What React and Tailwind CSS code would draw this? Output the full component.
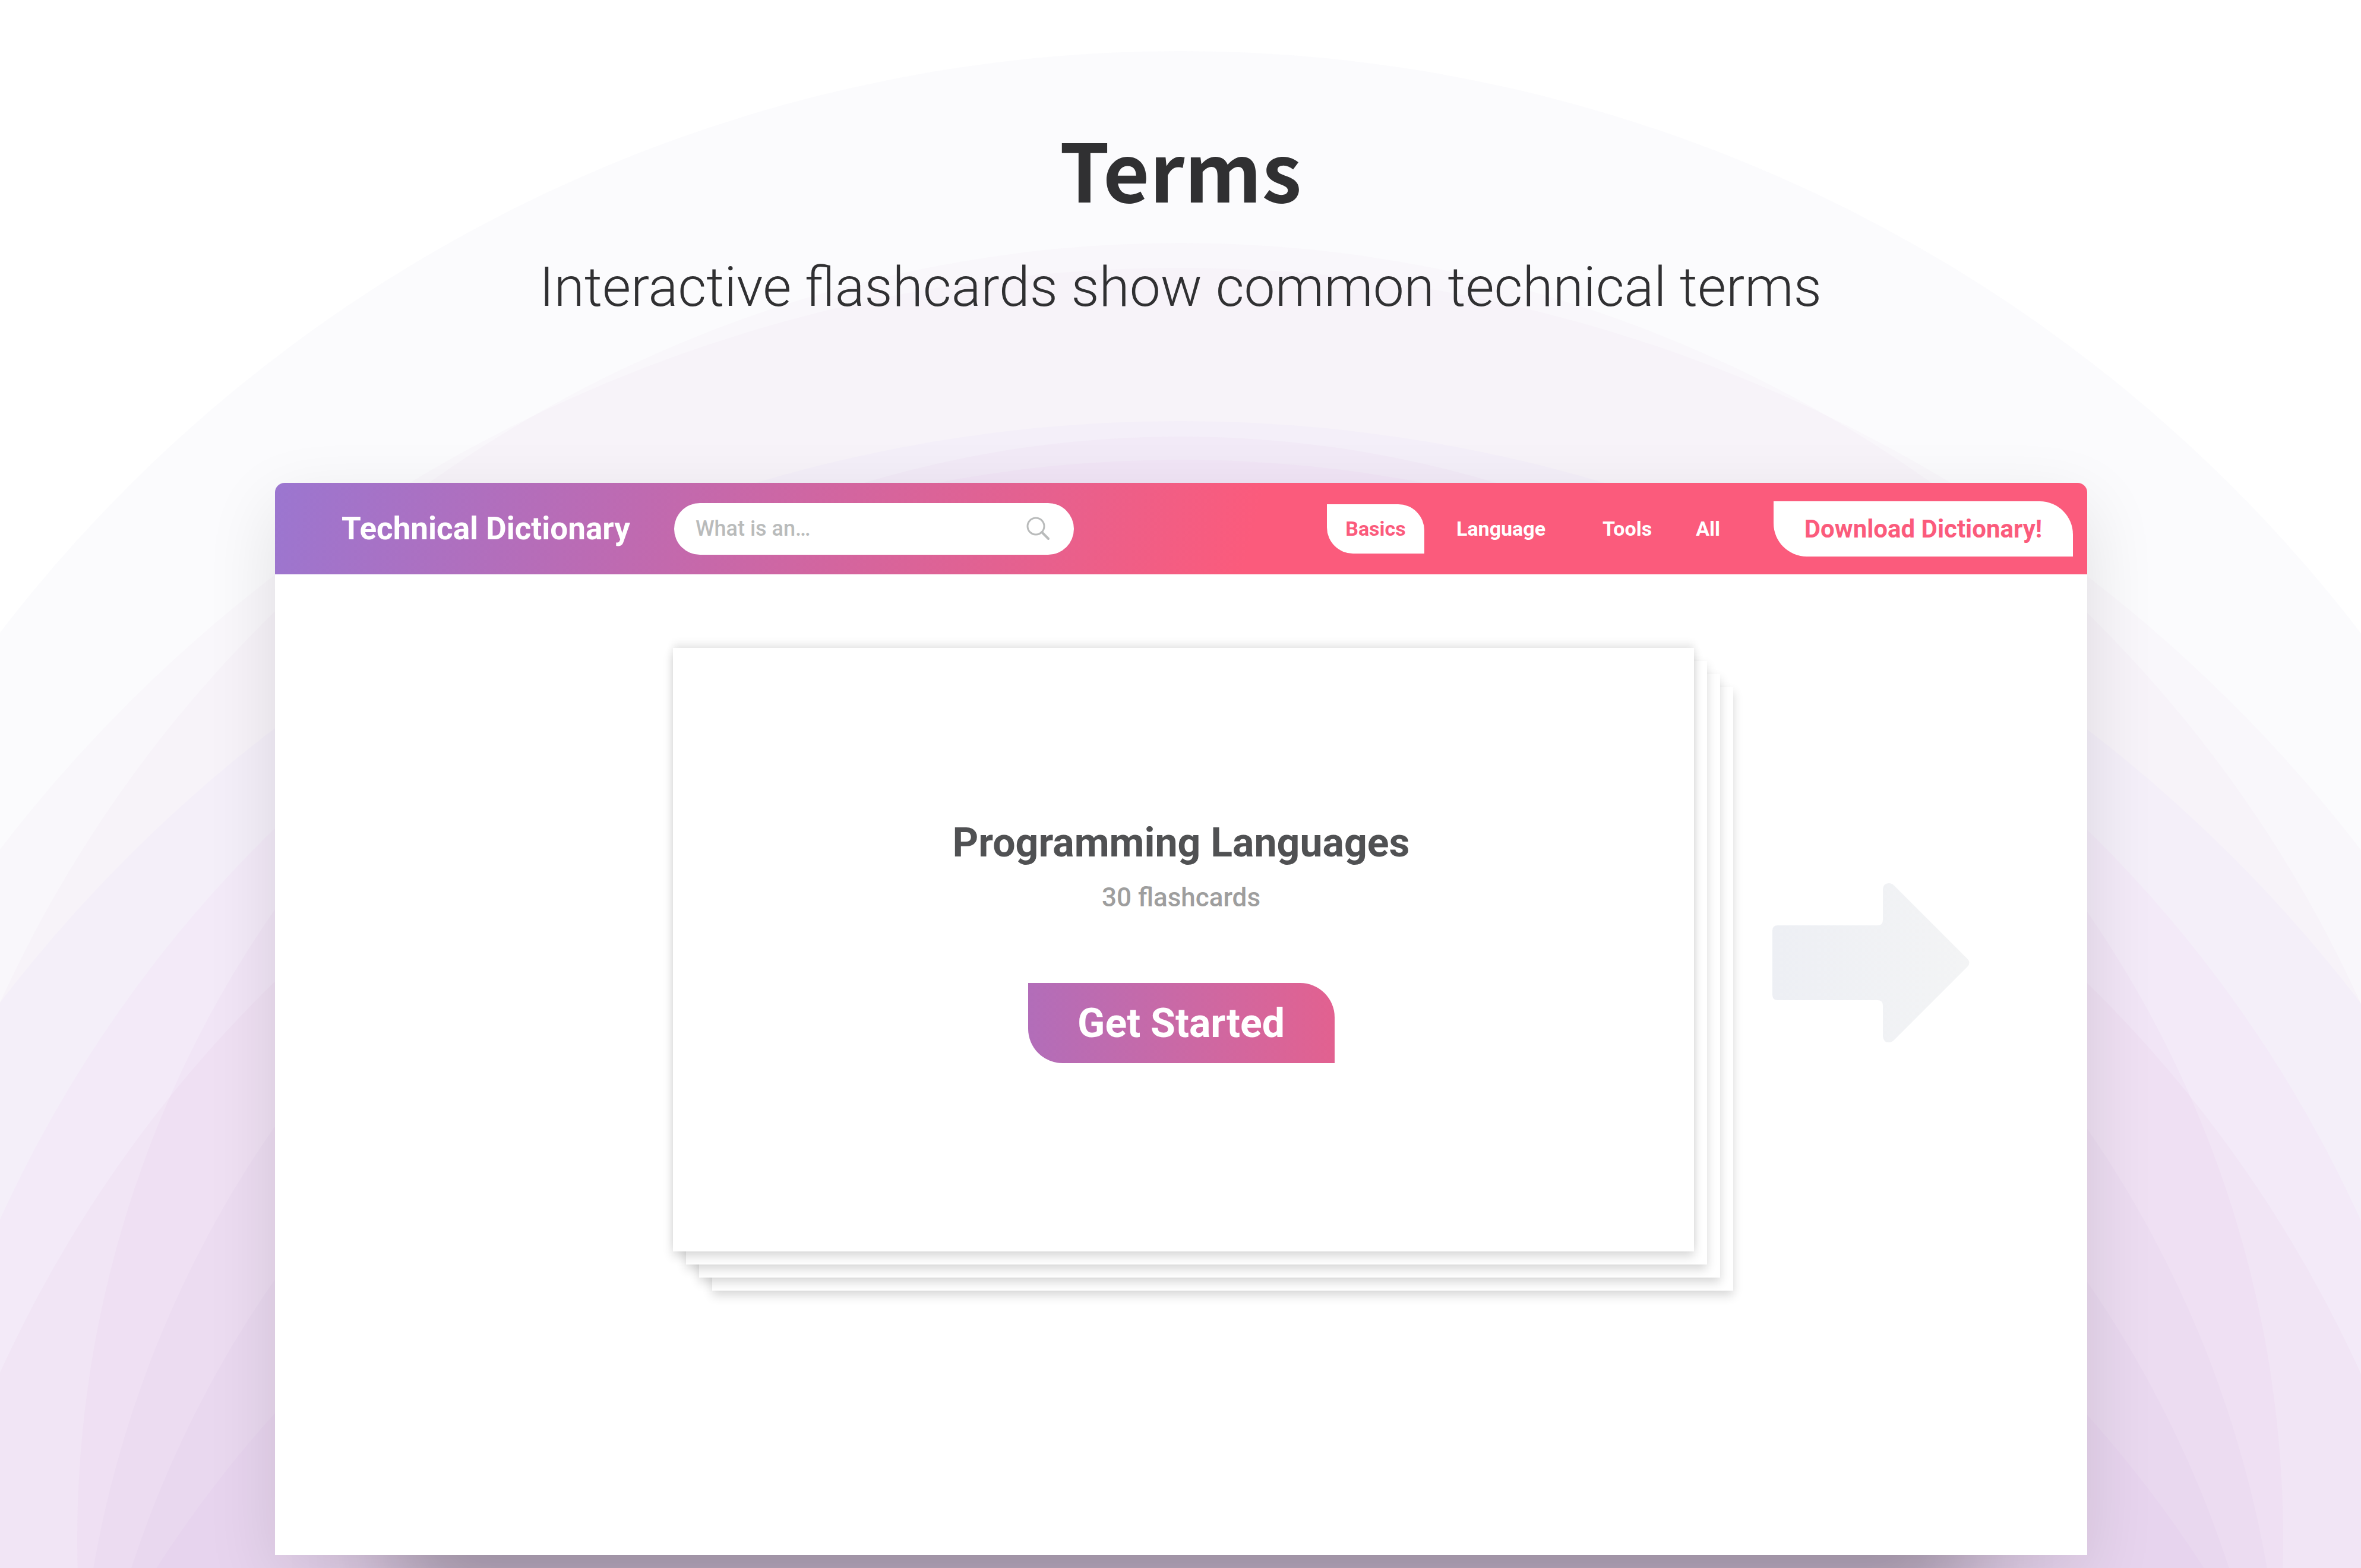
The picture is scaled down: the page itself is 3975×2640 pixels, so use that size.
const rings = [
  { cy: 2592, r: 2506, fill: "#8f8fc4" },
  { cy: 2592, r: 2183, fill: "#c482c4" },
  { cy: 2592, r: 1857, fill: "#c07cd0" },
  { cy: 2957, r: 2506, fill: "#c494c4" },
  { cy: 2957, r: 2183, fill: "#f078ea" },
  { cy: 2957, r: 1857, fill: "#a97fd0" },
  { cy: 3215, r: 2506, fill: "#b080f8" },
  { cy: 3215, r: 2183, fill: "#c07cb8" },
  { cy: 3215, r: 1857, fill: "#a97fd0" },
  { cy: 3750, r: 2050, fill: "#c07cd8" },
];

const links = [
  { label: "Language", gap: "ml-[54px]" },
  { label: "Tools", gap: "ml-[96px]" },
  { label: "All", gap: "ml-[74px]" },
];

function Backdrop() {
  return (
    <svg
      className="absolute inset-0 -z-10 w-full h-full"
      viewBox="0 0 3975 2640"
      preserveAspectRatio="xMidYMin slice"
      aria-hidden="true"
    >
      {rings.map((ring) => (
        <circle key={`${ring.cy}-${ring.r}`} cx="1987" cy={ring.cy} r={ring.r} fill={ring.fill} fillOpacity="0.035" />
      ))}
    </svg>
  );
}

function SearchIcon() {
  return (
    <svg className="w-10 h-10 shrink-0" viewBox="0 0 40 40" fill="none" stroke="#b9bbbb" aria-hidden="true">
      <circle cx="16" cy="16" r="14" strokeWidth="3" />
      <path d="M26 26 L37 37" strokeWidth="4" strokeLinecap="round" />
    </svg>
  );
}

function Navbar() {
  return (
    <header className="flex items-center h-[154px] pl-[112px] pr-6 rounded-t-[16px] bg-[linear-gradient(105deg,#9b76d0_0%,#bb6bb4_18%,#fb5b7c_54%)] text-white font-bold">
      <a href="#home" className="text-[53px] leading-none">Technical Dictionary</a>

      <label className="flex items-center w-[673px] h-[87px] ml-[74px] pl-9 pr-10 rounded-full bg-white">
        <input
          type="text"
          aria-label="Search terms"
          placeholder="What is an…"
          className="flex-1 min-w-0 bg-transparent outline-none text-[36px] font-medium text-[#505153] placeholder:text-[#b9bbbb]"
        />
        <SearchIcon />
      </label>

      <nav className="flex items-center ml-auto text-[34px]">
        <a href="#basics" className="flex items-center justify-center w-[164px] h-[83px] bg-white text-[#fb5b7c] rounded-tr-[44px] rounded-bl-[44px]">
          Basics
        </a>
        {links.map(({ label, gap }) => (
          <a key={label} href="#terms" className={gap}>{label}</a>
        ))}
      </nav>

      <button className="w-[504px] h-[93px] ml-[90px] bg-white text-[#fb5b7c] text-[42px] rounded-tr-[56px] rounded-bl-[56px]">
        Download Dictionary!
      </button>
    </header>
  );
}

function FlashcardDeck() {
  return (
    <div className="grid w-[1785px]">
      {[3, 2, 1].map((n) => (
        <div
          key={n}
          className="col-start-1 row-start-1 w-[1719px] bg-white shadow-[0_8px_16px_rgba(0,0,0,0.16)]"
          style={{ marginLeft: n * 22, marginTop: n * 22, marginBottom: -n * 22 }}
        />
      ))}
      <article className="col-start-1 row-start-1 relative flex flex-col items-center w-[1719px] h-[1016px] pt-[280px] pr-2 bg-white shadow-[0_8px_16px_rgba(0,0,0,0.16),0_-8px_12px_rgba(0,0,0,0.07)]">
        <h2 className="text-[68px] leading-[96px] font-bold text-[#505153]">Programming Languages</h2>
        <p className="mt-4 text-[44px] leading-[56px] font-medium text-[#9e9e9e]">30 flashcards</p>
        <button className="w-[516px] h-[135px] mt-[116px] bg-linear-to-r from-[#b26db9] to-[#e26190] text-white text-[68px] font-bold rounded-tr-[58px] rounded-bl-[58px]">
          Get Started
        </button>
      </article>
    </div>
  );
}

function NextArrow() {
  return (
    <svg className="w-[334px] h-[272px]" viewBox="0 0 334 272" aria-hidden="true">
      <defs>
        <linearGradient id="arrow" x1="0" x2="1">
          <stop offset="0" stopColor="#edeff4" />
          <stop offset="1" stopColor="#f3f4f5" />
        </linearGradient>
      </defs>
      <path
        d="M10 73H178Q187 73 187 64V12Q188 2 197 2Q202 2 206 6L329 129Q336 136 329 143L206 266Q202 270 197 270Q188 270 187 260V208Q187 199 178 199H10Q1 199 1 190V82Q1 73 10 73Z"
        fill="url(#arrow)"
      />
    </svg>
  );
}

export default function App() {
  return (
    <div className="relative isolate min-h-screen overflow-hidden bg-white font-[Roboto,sans-serif]">
      <Backdrop />

      <div className="pt-[202px] text-center text-[#303032]">
        <h1 className="font-['Noto_Sans_CJK_SC',sans-serif] text-[135px] leading-[160px] font-bold">Terms</h1>
        <p className="mt-[58px] text-[93px] leading-[128px] font-light">
          Interactive flashcards show common technical terms
        </p>
      </div>

      <main className="mt-[265px] ml-[463px] mr-[461px] rounded-t-[16px] bg-white shadow-[0_40px_120px_rgba(0,0,0,0.11),0_310px_150px_-200px_rgba(0,0,0,0.26)]">
        <Navbar />
        <div className="flex items-center pt-[124px] pb-[511px] pl-[670px]">
          <FlashcardDeck />
          <button aria-label="Next card" className="ml-[65px] mt-[44px]">
            <NextArrow />
          </button>
        </div>
      </main>
      <div className="h-5" />
    </div>
  );
}
